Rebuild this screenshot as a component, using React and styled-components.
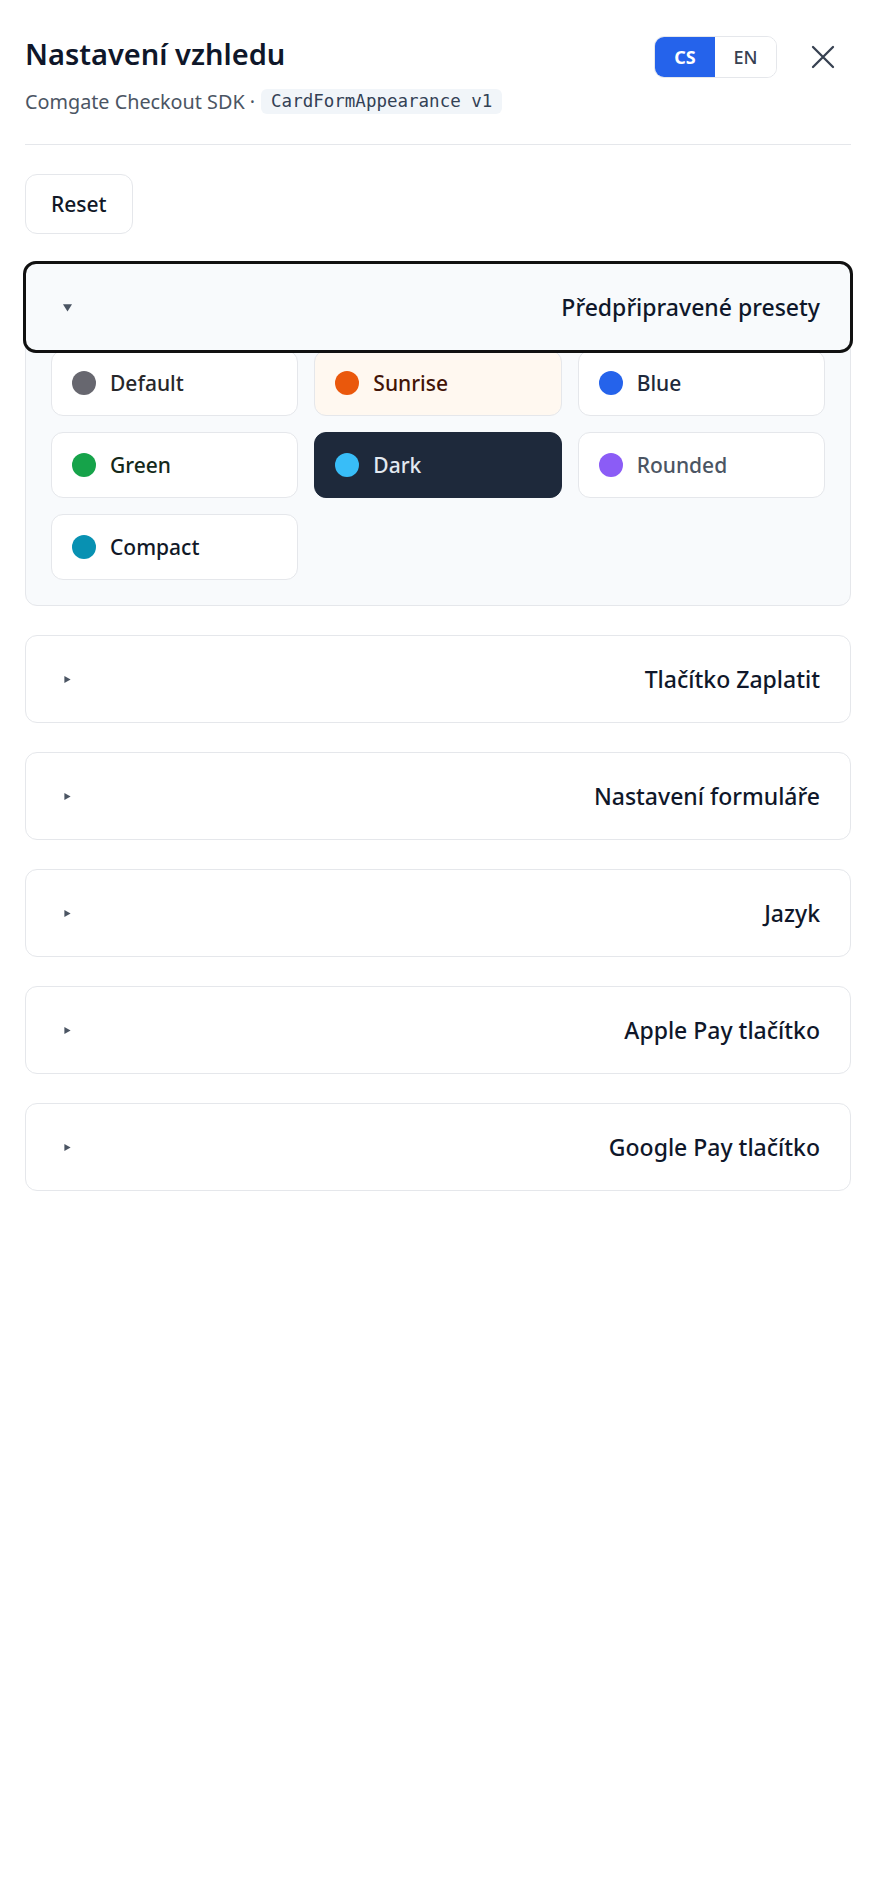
import React, { useState } from "react";
import styled, { createGlobalStyle } from "styled-components";

const GlobalStyle = createGlobalStyle`
  body {
    margin: 0;
    background: #ffffff;
    font-family: "Noto Sans", "Open Sans", sans-serif;
    color: #0f172a;
  }
  * { box-sizing: border-box; }
`;

const Page = styled.div`
  padding: 36px 29px 60px 25px;
`;

const Header = styled.header`
  display: flex;
  justify-content: space-between;
  align-items: flex-start;
  padding-bottom: 30px;
  border-bottom: 1px solid #e5e7eb;
`;

const Title = styled.h1`
  margin: 0;
  font-size: 29px;
  line-height: 36px;
  font-weight: 600;
  color: #0f172a;
`;

const Subtitle = styled.div`
  margin-top: 17px;
  display: flex;
  align-items: center;
  gap: 6px;
  font-size: 19.8px;
  line-height: 24px;
  color: #4b5563;
`;

const Code = styled.code`
  font-family: "DejaVu Sans Mono", "Liberation Mono", monospace;
  font-size: 17.5px;
  line-height: 25px;
  padding: 0 10px;
  border-radius: 6px;
  background: #f1f5f9;
  color: #334155;
`;

const Actions = styled.div`
  display: flex;
  align-items: center;
  gap: 26px;
  padding-right: 8px;
`;

const Toggle = styled.div`
  display: flex;
  height: 42px;
  border: 1px solid #e5e7eb;
  border-radius: 10px;
  overflow: hidden;
`;

const ToggleButton = styled.button`
  width: ${(p) => (p.$active ? "60px" : "61px")};
  border: 0;
  font-family: inherit;
  font-size: 18px;
  font-weight: ${(p) => (p.$active ? 700 : 500)};
  background: ${(p) => (p.$active ? "#2563eb" : "#ffffff")};
  color: ${(p) => (p.$active ? "#ffffff" : "#374151")};
  cursor: pointer;
`;

const CloseButton = styled.button`
  width: 40px;
  height: 42px;
  display: flex;
  align-items: center;
  justify-content: center;
  border: 0;
  background: none;
  padding: 0;
  color: #374151;
  cursor: pointer;
`;

const Body = styled.main`
  display: flex;
  flex-direction: column;
  align-items: flex-start;
  gap: 29px;
  padding-top: 29px;
`;

const ResetButton = styled.button`
  height: 60px;
  padding: 0 25px;
  border: 1px solid #e5e7eb;
  border-radius: 12px;
  background: #ffffff;
  font-family: inherit;
  font-size: 21px;
  font-weight: 500;
  color: #111827;
`;

const Section = styled.section`
  align-self: stretch;
  border: 1px solid #e5e7eb;
  border-radius: 12px;
  background: ${(p) => (p.$open ? "#f8fafc" : "#ffffff")};
`;

const Summary = styled.div`
  position: relative;
  z-index: 1;
  display: flex;
  align-items: center;
  justify-content: space-between;
  padding: 28px 30px 28px 37px;
  border-radius: 10px;
  font-size: 23px;
  line-height: 30px;
  font-weight: 500;
  color: #0f172a;
  background: ${(p) => (p.$open ? "#f8fafc" : "transparent")};
  outline: ${(p) => (p.$open ? "3px solid #111111" : "none")};
  outline-offset: 0;
  cursor: pointer;
`;

const Marker = styled.svg`
  width: 9px;
  height: 9px;
  fill: #4b5563;
  flex: none;
`;

const Grid = styled.div`
  display: grid;
  grid-template-columns: repeat(3, 1fr);
  gap: 16px;
  padding: 0 25px 25px;
`;

const PresetCard = styled.button`
  height: 66px;
  display: flex;
  align-items: center;
  gap: 14px;
  padding: 0 20px;
  border: 1px solid ${(p) => (p.$bg === "#1e293b" ? "#1e293b" : "#e5e7eb")};
  border-radius: 12px;
  background: ${(p) => p.$bg};
  color: ${(p) => p.$fg};
  font-family: inherit;
  font-size: 21px;
  font-weight: 500;
  text-align: left;
  cursor: pointer;
`;

const Dot = styled.span`
  width: 24px;
  height: 24px;
  border-radius: 50%;
  background: ${(p) => p.$color};
  flex: none;
`;

const presets = [
  { name: "Default", dot: "#67676f", fg: "#27272a", bg: "#ffffff" },
  { name: "Sunrise", dot: "#ea580c", fg: "#431407", bg: "#fff8f0" },
  { name: "Blue", dot: "#2563eb", fg: "#1e293b", bg: "#ffffff" },
  { name: "Green", dot: "#16a34a", fg: "#14291a", bg: "#ffffff" },
  { name: "Dark", dot: "#38bdf8", fg: "#e2e8f0", bg: "#1e293b" },
  { name: "Rounded", dot: "#8b5cf6", fg: "#4b5563", bg: "#ffffff" },
  { name: "Compact", dot: "#0891b2", fg: "#111827", bg: "#ffffff" },
];

const sections = [
  "Tlačítko Zaplatit",
  "Nastavení formuláře",
  "Jazyk",
  "Apple Pay tlačítko",
  "Google Pay tlačítko",
];

const Arrow = ({ open }) => (
  <Marker viewBox="0 0 10 10">
    {open ? <path d="M0 1.5 L10 1.5 L5 9.5 Z" /> : <path d="M1.5 1 L8.5 5 L1.5 9 Z" />}
  </Marker>
);

export default function App() {
  const [lang, setLang] = useState("cs");

  return (
    <Page>
      <GlobalStyle />
      <Header>
        <div>
          <Title>Nastavení vzhledu</Title>
          <Subtitle>
            Comgate Checkout SDK ·<Code>CardFormAppearance v1</Code>
          </Subtitle>
        </div>
        <Actions>
          <Toggle>
            <ToggleButton $active={lang === "cs"} onClick={() => setLang("cs")}>CS</ToggleButton>
            <ToggleButton $active={lang === "en"} onClick={() => setLang("en")}>EN</ToggleButton>
          </Toggle>
          <CloseButton aria-label="Zavřít">
            <svg width="24" height="24" viewBox="0 0 24 24" fill="none" stroke="currentColor" strokeWidth="2.3" strokeLinecap="round">
              <path d="M2 2 L22 22 M22 2 L2 22" />
            </svg>
          </CloseButton>
        </Actions>
      </Header>

      <Body>
        <ResetButton>Reset</ResetButton>

        <Section $open>
          <Summary $open>
            <Arrow open />
            <span>Předpřipravené presety</span>
          </Summary>
          <Grid>
            {presets.map((p) => (
              <PresetCard key={p.name} $bg={p.bg} $fg={p.fg}>
                <Dot $color={p.dot} />
                {p.name}
              </PresetCard>
            ))}
          </Grid>
        </Section>

        {sections.map((s) => (
          <Section key={s}>
            <Summary>
              <Arrow />
              <span>{s}</span>
            </Summary>
          </Section>
        ))}
      </Body>
    </Page>
  );
}
